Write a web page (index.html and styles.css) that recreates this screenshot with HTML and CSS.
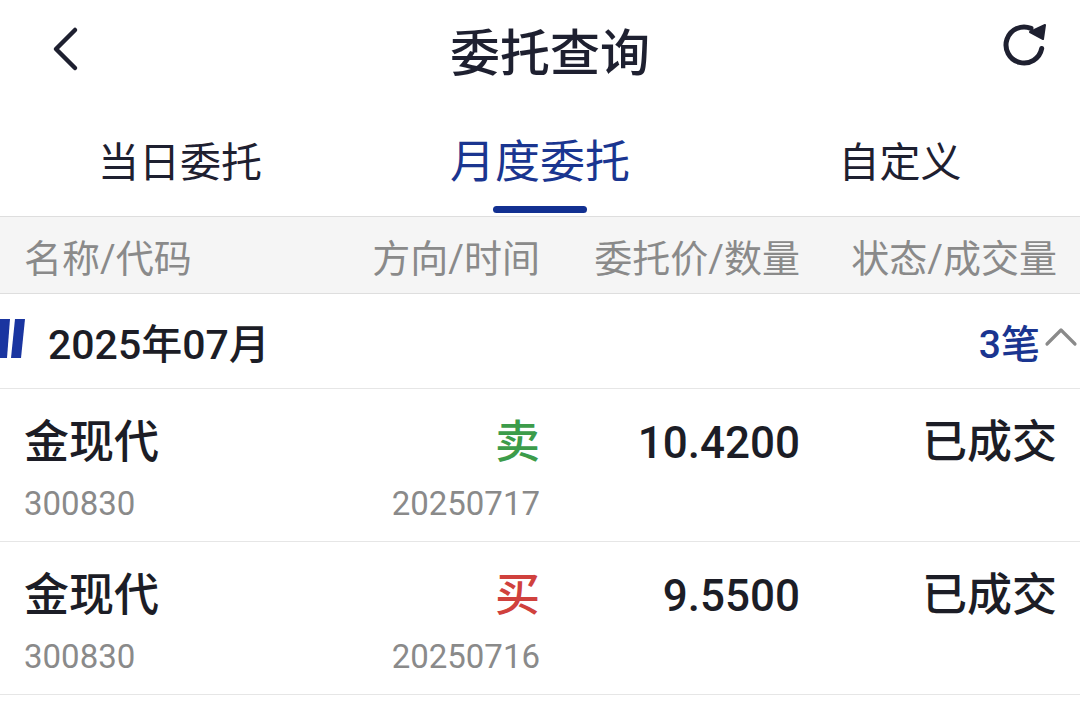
FILE: index.html
```html
<!DOCTYPE html>
<html lang="zh-CN">
<head>
  <meta charset="UTF-8">
  <title>委托查询</title>
  <link rel="stylesheet" href="styles.css">
</head>
<body>
<div class="page">
  <div class="navbar">
    <svg class="nav-back" width="40" height="50" viewBox="0 0 40 50">
      <polyline points="35,7 16,26 35,45" fill="none" stroke="#1e2030" stroke-width="4.5" stroke-linecap="round" stroke-linejoin="round"/>
    </svg>
    <div class="nav-title">委托查询</div>
    <svg class="nav-refresh" width="50" height="50" viewBox="0 0 50 50">
      <path d="M41.7 27.5 A18 18 0 1 1 31 7.4" fill="none" stroke="#1e2030" stroke-width="5" stroke-linecap="round"/>
      <polygon points="30,11 45,4 43,18" fill="#1e2030" stroke="#1e2030" stroke-width="2" stroke-linejoin="round"/>
    </svg>
  </div>

  <div class="tabs">
    <div class="tab">当日委托</div>
    <div class="tab active">月度委托</div>
    <div class="tab">自定义</div>
  </div>

  <div class="thead grid">
    <div>名称/代码</div>
    <div class="r">方向/时间</div>
    <div class="r">委托价/数量</div>
    <div class="r">状态/成交量</div>
  </div>

  <div class="group">
    <svg class="group-mark" width="26" height="40" viewBox="0 0 26 40">
      <polygon points="0,0 10,0 7,39 0,39" fill="#1a35a0"/>
      <polygon points="15,0 25,0 21,39 11,39" fill="#1a35a0"/>
    </svg>
    <div class="group-title">2025年07月</div>
    <div class="group-count">3笔</div>
    <svg class="group-fold" width="34" height="24" viewBox="0 0 34 24">
      <polyline points="3,19 17,5 31,19" fill="none" stroke="#8a8a8a" stroke-width="3.2" stroke-linecap="round" stroke-linejoin="round"/>
    </svg>
  </div>

  <div class="row grid">
    <div>
      <div class="main">金现代</div>
      <div class="sub">300830</div>
    </div>
    <div class="r">
      <div class="main sell">卖</div>
      <div class="sub">20250717</div>
    </div>
    <div class="r">
      <div class="main num">10.4200</div>
      <div class="sub"></div>
    </div>
    <div class="r">
      <div class="main">已成交</div>
      <div class="sub"></div>
    </div>
  </div>

  <div class="row grid">
    <div>
      <div class="main">金现代</div>
      <div class="sub">300830</div>
    </div>
    <div class="r">
      <div class="main buy">买</div>
      <div class="sub">20250716</div>
    </div>
    <div class="r">
      <div class="main num">9.5500</div>
      <div class="sub"></div>
    </div>
    <div class="r">
      <div class="main">已成交</div>
      <div class="sub"></div>
    </div>
  </div>
</div>
</body>
</html>
```

FILE: styles.css
```css
body {
	margin: 0;
	background: #fff;
	font-family: Roboto, "Noto Sans CJK SC", sans-serif;
	color: #1c1d26;
}
.page {
	width: 1080px;
	height: 705px;
	overflow: hidden;
}
.navbar {
	height: 100px;
	display: flex;
	align-items: center;
	justify-content: space-between;
	padding: 0 30px 0 40px;
}
.nav-back {
	margin-top: -4px;
}
.nav-title {
	font-size: 50px;
	font-weight: 500;
	color: #1e2030;
	margin-left: 20px;
	margin-top: -2px;
}
.nav-refresh {
	margin-top: -8px;
}
.tabs {
	height: 116px;
	display: grid;
	grid-template-columns: 1fr 1fr 1fr;
}
.tab {
	position: relative;
	display: flex;
	justify-content: center;
	padding-top: 33px;
	font-size: 41px;
	line-height: 60px;
	color: #1e2030;
}
.tab.active {
	font-size: 45px;
	color: #1a3590;
}
.tab.active::after {
	content: "";
	position: absolute;
	left: 133px;
	top: 106px;
	width: 94px;
	height: 7px;
	border-radius: 4px;
	background: #123091;
}
.grid {
	display: grid;
	grid-template-columns: 1fr 260px 260px 257px;
	padding: 0 23px 0 24px;
}
.r {
	text-align: right;
}
.thead {
	height: 76px;
	align-items: center;
	background: #f5f5f5;
	border-top: 1px solid #dedede;
	border-bottom: 1px solid #dedede;
	font-size: 38px;
	color: #8a8a8a;
}
.group {
	height: 94px;
	display: flex;
	align-items: center;
	border-bottom: 1px solid #e6e6e6;
	padding-right: 2px;
}
.group-mark {
	margin-top: -5px;
}
.group-title {
	margin-left: 22px;
	font-size: 41px;
	font-weight: 500;
	flex: 1;
	color: #1c1d26;
}
.group-count {
	font-size: 39px;
	font-weight: 500;
	color: #1a3590;
}
.group-fold {
	margin-left: 4px;
	margin-top: -8px;
}
.row {
	border-bottom: 1px solid #e6e6e6;
	padding-top: 24px;
	box-sizing: content-box;
	height: 128px;
}
.main {
	font-size: 45px;
	font-weight: 500;
	line-height: 60px;
	color: #1c1d26;
}
.main.num {
	font-size: 44px;
}
.sub {
	margin-top: 7px;
	font-size: 33px;
	line-height: 48px;
	color: #8a8a8a;
}
.sell {
	color: #3c9c4a;
}
.buy {
	color: #d0413d;
}
```
